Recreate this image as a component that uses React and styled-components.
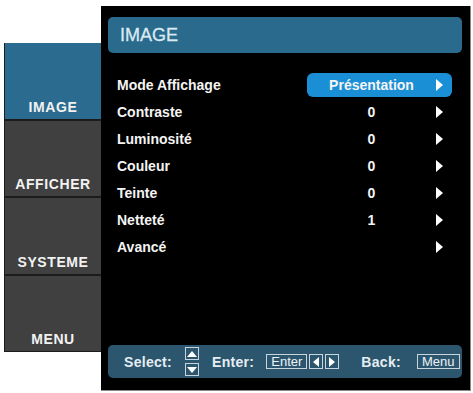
import React from "react";
import styled, { createGlobalStyle } from "styled-components";

const GlobalStyle = createGlobalStyle`
  html, body {
    margin: 0;
    padding: 0;
    background: #ffffff;
  }
  body {
    font-family: "Liberation Sans", Arial, sans-serif;
  }
`;

const Screen = styled.div`
  width: 473px;
  height: 393px;
  display: flex;
  align-items: flex-start;
  padding-left: 4px;
  box-sizing: border-box;
  overflow: hidden;
`;

const Sidebar = styled.div`
  margin-top: 43px;
  width: 97px;
  height: 309px;
  box-sizing: border-box;
  display: grid;
  grid-template-rows: repeat(4, 1fr);
  gap: 2px;
  padding: 0 0 1px 1px;
  background: #1c1c1c;
`;

const Tab = styled.div`
  display: flex;
  align-items: flex-end;
  justify-content: center;
  padding-bottom: 4px;
  background: ${(p) => (p.$active ? "#2b6b8f" : "#404040")};
  color: #f2f2f2;
  font-size: 14px;
  font-weight: bold;
  letter-spacing: 0.6px;
`;

const Panel = styled.div`
  margin-top: 6px;
  width: 370px;
  height: 385px;
  box-sizing: border-box;
  background: #000000;
  border-right: 1px solid #8a8a8a;
  border-bottom: 1px solid #8a8a8a;
  display: flex;
  flex-direction: column;
  padding: 11px 8px 12px 7px;
`;

const Header = styled.div`
  height: 36px;
  border-radius: 5px;
  background: #2a6a8c;
  color: #dbeaf2;
  font-size: 18px;
  display: flex;
  align-items: center;
  padding-left: 12px;
  -webkit-text-stroke: 0.3px #dbeaf2;
`;

const RowList = styled.div`
  margin-top: 18px;
  display: flex;
  flex-direction: column;
`;

const Row = styled.div`
  height: 27px;
  display: flex;
  align-items: center;
  padding-left: 9px;
  padding-right: 10px;
`;

const Label = styled.div`
  flex: 1;
  color: #f4f4f4;
  font-size: 14px;
  font-weight: bold;
`;

const Value = styled.div`
  width: 145px;
  height: 24px;
  border-radius: 6px;
  display: flex;
  align-items: center;
  background: ${(p) => (p.$selected ? "#1b8fd6" : "transparent")};
`;

const ValueText = styled.div`
  width: 129px;
  text-align: center;
  color: #f4f4f4;
  font-size: 14px;
  font-weight: bold;
`;

const Arrow = styled.span`
  width: 0;
  height: 0;
  border-top: 6px solid transparent;
  border-bottom: 6px solid transparent;
  border-left: 7px solid #ffffff;
`;

const Footer = styled.div`
  margin-top: auto;
  height: 33px;
  border-radius: 5px;
  background: #2b566e;
  display: flex;
  align-items: center;
  padding-left: 16px;
`;

const FooterLabel = styled.span`
  color: #e6edf2;
  font-size: 14px;
  font-weight: bold;
  letter-spacing: 0.3px;
  margin-left: ${(p) => p.$space || 0}px;
`;

const KeyBox = styled.span`
  height: 15px;
  box-sizing: border-box;
  border: 1px solid #c9d5dc;
  color: #eef3f6;
  font-size: 13px;
  line-height: 13px;
  padding: 0 4px;
  display: inline-flex;
  align-items: center;
  margin-left: ${(p) => p.$space || 0}px;
`;

const ArrowKey = styled.span`
  width: 14px;
  height: 15px;
  box-sizing: border-box;
  border: 1px solid #c9d5dc;
  display: inline-flex;
  align-items: center;
  justify-content: center;
  margin-left: ${(p) => p.$space || 0}px;
`;

const UpDown = styled.span`
  display: flex;
  flex-direction: column;
  gap: 3px;
  margin-left: 13px;
`;

const UpDownKey = styled.span`
  width: 14px;
  height: 13px;
  box-sizing: border-box;
  border: 1px solid #c9d5dc;
  display: flex;
  align-items: center;
  justify-content: center;
`;

const Tri = ({ dir }) => {
  const points = {
    left: "6,0 6,10 0,5",
    right: "0,0 0,10 6,5",
    up: "0,6 10,6 5,0",
    down: "0,0 10,0 5,6",
  }[dir];
  const vertical = dir === "up" || dir === "down";
  return (
    <svg
      width={vertical ? 10 : 6}
      height={vertical ? 6 : 10}
      viewBox={vertical ? "0 0 10 6" : "0 0 6 10"}
    >
      <polygon points={points} fill="#ffffff" />
    </svg>
  );
};

const tabs = ["IMAGE", "AFFICHER", "SYSTEME", "MENU"];

const settings = [
  { label: "Mode Affichage", value: "Présentation", selected: true },
  { label: "Contraste", value: "0" },
  { label: "Luminosité", value: "0" },
  { label: "Couleur", value: "0" },
  { label: "Teinte", value: "0" },
  { label: "Netteté", value: "1" },
  { label: "Avancé", value: "" },
];

const App = () => {
  return (
    <>
      <GlobalStyle />
      <Screen>
        <Sidebar>
          {tabs.map((t, i) => (
            <Tab key={t} $active={i === 0}>
              {t}
            </Tab>
          ))}
        </Sidebar>
        <Panel>
          <Header>IMAGE</Header>
          <RowList>
            {settings.map((s) => (
              <Row key={s.label}>
                <Label>{s.label}</Label>
                <Value $selected={s.selected}>
                  <ValueText>{s.value}</ValueText>
                  <Arrow />
                </Value>
              </Row>
            ))}
          </RowList>
          <Footer>
            <FooterLabel>Select:</FooterLabel>
            <UpDown>
              <UpDownKey>
                <Tri dir="up" />
              </UpDownKey>
              <UpDownKey>
                <Tri dir="down" />
              </UpDownKey>
            </UpDown>
            <FooterLabel $space={13}>Enter:</FooterLabel>
            <KeyBox $space={12}>Enter</KeyBox>
            <ArrowKey $space={2}>
              <Tri dir="left" />
            </ArrowKey>
            <ArrowKey $space={2}>
              <Tri dir="right" />
            </ArrowKey>
            <FooterLabel $space={22}>Back:</FooterLabel>
            <KeyBox $space={16}>Menu</KeyBox>
          </Footer>
        </Panel>
      </Screen>
    </>
  );
};

export default App;
